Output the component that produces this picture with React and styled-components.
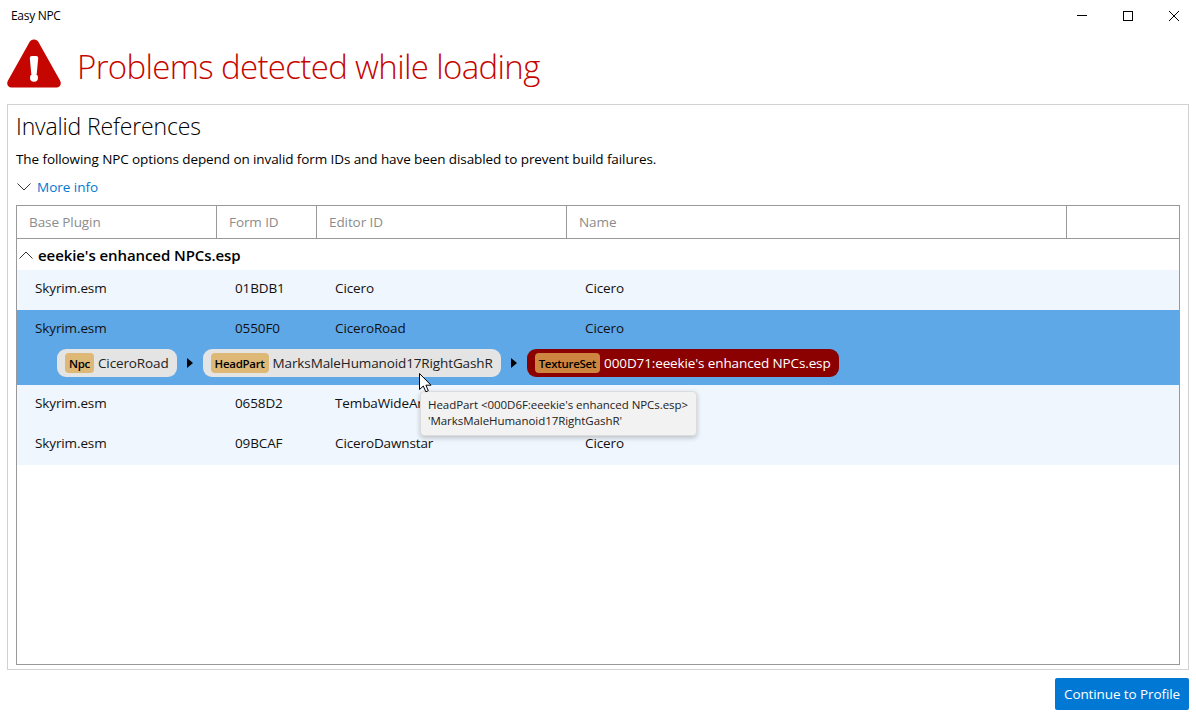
import React from "react";
import styled, { createGlobalStyle } from "styled-components";

const GlobalStyle = createGlobalStyle`
  html, body {
    margin: 0;
    padding: 0;
    background: #fff;
    overflow: hidden;
  }
  body {
    font-family: "Open Sans", "Noto Sans", "Liberation Sans", sans-serif;
    color: #000;
  }
  * { box-sizing: border-box; }
`;

const Window = styled.div`
  width: 1196px;
  height: 717px;
  display: flex;
  flex-direction: column;
  position: relative;
`;

const TitleBar = styled.div`
  height: 31px;
  display: flex;
  align-items: center;
  justify-content: space-between;
  padding-left: 11px;
  font-size: 12px;
  letter-spacing: -0.3px;
`;

const WindowButtons = styled.div`
  display: flex;
  margin-right: -1px;
`;

const WindowButton = styled.div`
  width: 46px;
  height: 31px;
  padding-top: 1px;
  display: flex;
  align-items: center;
  justify-content: center;
`;

const Header = styled.div`
  height: 73px;
  padding: 8px 0 0 7px;
  display: flex;
  align-items: flex-start;
  gap: 15px;
`;

const HeaderTitle = styled.h1`
  margin: 1px 0 0;
  font-size: 33px;
  line-height: 54px;
  font-weight: 300;
  color: #c50500;
  letter-spacing: -0.65px;
`;

const Panel = styled.section`
  margin: 0 7px;
  height: 566px;
  border: 1px solid #d2d2d2;
  padding: 0 8px 4px 8px;
  display: flex;
  flex-direction: column;
`;

const PanelTitle = styled.h2`
  margin: 5px 0 0;
  font-size: 23px;
  font-weight: 300;
  line-height: 32px;
  letter-spacing: -0.15px;
`;

const Description = styled.p`
  margin: 7px 0 0;
  font-size: 13.5px;
  line-height: 20px;
  letter-spacing: -0.09px;
`;

const MoreInfo = styled.div`
  display: flex;
  align-items: center;
  gap: 6px;
  height: 20px;
  margin: 8px 0;
  padding-left: 1px;
  color: #0078d4;
  font-size: 13.5px;
`;

const Chevron = styled.svg`
  flex: none;
  transform: ${(p) => (p.$up ? "rotate(180deg)" : "none")};
`;

const Table = styled.div`
  flex: 1;
  border: 1px solid #999;
  display: flex;
  flex-direction: column;
  position: relative;
`;

const HeaderRow = styled.div`
  display: grid;
  grid-template-columns: 200px 100px 250px 500px 1fr;
  height: 33px;
  border-bottom: 1px solid #999;
`;

const HeaderCell = styled.div`
  padding-left: 12px;
  display: flex;
  align-items: center;
  font-size: 13.5px;
  color: #8c8c8c;
  letter-spacing: -0.09px;
  border-right: ${(p) => (p.$last ? "none" : "1px solid #999")};
`;

const GroupRow = styled.div`
  height: 31px;
  display: flex;
  align-items: center;
  gap: 5px;
  padding-left: 2px;
  font-size: 15px;
  font-weight: 600;
  letter-spacing: -0.08px;
`;

const Row = styled.div`
  background: ${(p) => (p.$selected ? "#5fa8e8" : "#eff6fd")};
`;

const Cells = styled.div`
  display: grid;
  grid-template-columns: 200px 100px 250px 1fr;
  height: 40px;
  padding-bottom: 4px;
  align-items: center;
  font-size: 13.5px;
  letter-spacing: -0.12px;
  color: #111;
`;

const Cell = styled.div`
  padding-left: 18px;
  white-space: nowrap;
`;

const Path = styled.div`
  height: 36px;
  margin-top: -1px;
  display: flex;
  align-items: flex-start;
  padding-left: 40px;
  gap: 9px;
`;

const Chip = styled.div`
  height: 28px;
  border-radius: 9px;
  display: flex;
  align-items: center;
  gap: 4px;
  padding: 0 8px;
  font-size: 13.5px;
  letter-spacing: -0.12px;
  white-space: nowrap;
  background: ${(p) => (p.$bad ? "#8b0000" : "#e4e4e4")};
  color: ${(p) => (p.$bad ? "#fff" : "#222")};
`;

const ChipTag = styled.span`
  height: 20px;
  display: flex;
  align-items: center;
  padding: 0 4px;
  border-radius: 4px;
  font-size: 11.5px;
  font-weight: 600;
  letter-spacing: -0.3px;
  color: #000;
  background: ${(p) => (p.$bad ? "#cd853f" : "#deb877")};
`;

const Arrow = styled.div`
  width: 0;
  height: 0;
  margin: 9px 1px 0;
  border-top: 5px solid transparent;
  border-bottom: 5px solid transparent;
  border-left: 6px solid #000;
`;

const Tooltip = styled.div`
  position: absolute;
  left: 403px;
  top: 185px;
  width: 277px;
  height: 45px;
  padding: 5px 7px;
  background: #f2f2f2;
  border: 1px solid #dcdcdc;
  border-radius: 4px;
  box-shadow: 0 2px 5px rgba(0, 0, 0, 0.22);
  font-size: 11.5px;
  line-height: 16px;
  letter-spacing: -0.05px;
  color: #222;
  white-space: nowrap;
`;

const Cursor = styled.svg`
  position: absolute;
  left: 402px;
  top: 167px;
`;

const Footer = styled.div`
  flex: 1;
  display: flex;
  justify-content: flex-end;
  padding: 8px 7px 0 0;
`;

const PrimaryButton = styled.button`
  width: 134px;
  height: 32px;
  border: none;
  border-radius: 2px;
  background: #0078d4;
  color: #fff;
  font-family: inherit;
  font-size: 13.5px;
  letter-spacing: -0.1px;
`;

const rows = [
  { plugin: "Skyrim.esm", id: "01BDB1", editor: "Cicero", name: "Cicero" },
  { plugin: "Skyrim.esm", id: "0550F0", editor: "CiceroRoad", name: "Cicero", selected: true },
  { plugin: "Skyrim.esm", id: "0658D2", editor: "TembaWideAr", name: "" },
  { plugin: "Skyrim.esm", id: "09BCAF", editor: "CiceroDawnstar", name: "Cicero" },
];

function WarningIcon() {
  return (
    <svg width="55" height="50" viewBox="0.5 0 55 50">
      <path
        d="M27.5 0.5 C30 0.5 31.5 2 32.5 4 L53.5 41.5 C55.5 45 53.5 48.5 50 48.5 L5 48.5 C1.5 48.5 -0.5 45 1.5 41.5 L22.5 4 C23.5 2 25 0.5 27.5 0.5 Z"
        fill="#c50500"
      />
      <path d="M23.3 19 q0 -2 2 -2 h4.400 q2 0 2 2 l-1.500 16 h-5.400 Z" fill="#fff" />
      <circle cx="27.5" cy="38.8" r="4" fill="#fff" />
    </svg>
  );
}

function ChevronIcon({ up }) {
  return (
    <Chevron $up={up} width="14" height="8" viewBox="0 0 14 8">
      <path d="M0.5 0.5 L7 7 L13.5 0.5" fill="none" stroke="#333" strokeWidth="1" />
    </Chevron>
  );
}

function PathChip({ tag, label, bad }) {
  return (
    <Chip $bad={bad}>
      <ChipTag $bad={bad}>{tag}</ChipTag>
      {label}
    </Chip>
  );
}

export default function App() {
  return (
    <Window>
      <GlobalStyle />
      <TitleBar>
        Easy NPC
        <WindowButtons>
          <WindowButton>
            <svg width="10" height="10" viewBox="0 0 10 10">
              <path d="M0 4.5 H10" stroke="#000" strokeWidth="1" />
            </svg>
          </WindowButton>
          <WindowButton>
            <svg width="10" height="10" viewBox="0 0 10 10">
              <rect x="0.5" y="0.5" width="9" height="9" fill="none" stroke="#000" strokeWidth="1" />
            </svg>
          </WindowButton>
          <WindowButton>
            <svg width="10" height="10" viewBox="0 0 10 10">
              <path d="M0 0 L10 10 M10 0 L0 10" stroke="#000" strokeWidth="1" />
            </svg>
          </WindowButton>
        </WindowButtons>
      </TitleBar>
      <Header>
        <WarningIcon />
        <HeaderTitle>Problems detected while loading</HeaderTitle>
      </Header>
      <Panel>
        <PanelTitle>Invalid References</PanelTitle>
        <Description>
          The following NPC options depend on invalid form IDs and have been disabled to prevent build failures.
        </Description>
        <MoreInfo>
          <ChevronIcon />
          More info
        </MoreInfo>
        <Table>
          <HeaderRow>
            <HeaderCell>Base Plugin</HeaderCell>
            <HeaderCell>Form ID</HeaderCell>
            <HeaderCell>Editor ID</HeaderCell>
            <HeaderCell>Name</HeaderCell>
            <HeaderCell $last />
          </HeaderRow>
          <GroupRow>
            <ChevronIcon up />
            eeekie's enhanced NPCs.esp
          </GroupRow>
          {rows.map((row) => (
            <Row key={row.id} $selected={row.selected}>
              <Cells>
                <Cell>{row.plugin}</Cell>
                <Cell>{row.id}</Cell>
                <Cell>{row.editor}</Cell>
                <Cell>{row.name}</Cell>
              </Cells>
              {row.selected && (
                <Path>
                  <PathChip tag="Npc" label="CiceroRoad" />
                  <Arrow />
                  <PathChip tag="HeadPart" label="MarksMaleHumanoid17RightGashR" />
                  <Arrow />
                  <PathChip tag="TextureSet" label="000D71:eeekie's enhanced NPCs.esp" bad />
                </Path>
              )}
            </Row>
          ))}
          <Tooltip>
            HeadPart &lt;000D6F:eeekie's enhanced NPCs.esp&gt;
            <br />
            'MarksMaleHumanoid17RightGashR'
          </Tooltip>
          <Cursor width="13" height="20" viewBox="0 0 13 20">
            <path
              d="M0.5 0.5 V16.5 L4.3 13 L6.8 18.8 L9.3 17.7 L6.9 12.2 H12 Z"
              fill="#fff"
              stroke="#000"
              strokeWidth="1"
            />
          </Cursor>
        </Table>
      </Panel>
      <Footer>
        <PrimaryButton>Continue to Profile</PrimaryButton>
      </Footer>
    </Window>
  );
}
